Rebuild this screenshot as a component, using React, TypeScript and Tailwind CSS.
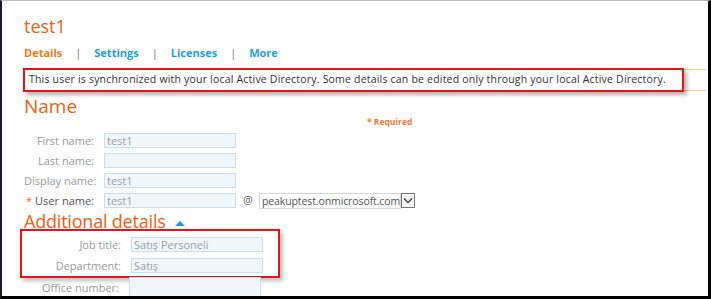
import React from "react";

const font = { fontFamily: '"Open Sans", "Noto Sans", sans-serif' };

function Input({ value }: { value?: string }) {
  return (
    <div className="w-[132px] h-[15px] bg-[#f1f6fb] border border-[#c9def0] text-[11px] leading-[13px] text-[#a0a0a0] px-[2px] overflow-hidden whitespace-nowrap">
      {value}
    </div>
  );
}

function Row({
  label,
  value,
  labelW,
  star,
  children,
}: {
  label: string;
  value?: string;
  labelW: string;
  star?: boolean;
  children?: React.ReactNode;
}) {
  return (
    <div className="flex items-center h-[15px]">
      <div className={`${labelW} text-right text-[11px] leading-[15px] text-[#9a9a9a] pr-[10px] whitespace-nowrap`}>
        {star && <span className="text-[#f26b1d] mr-[3px]">*</span>}
        <span className={star ? "text-[#555]" : ""}>{label}</span>
      </div>
      <Input value={value} />
      {children}
    </div>
  );
}

export default function App() {
  return (
    <div
      className="w-[711px] h-[299px] bg-white border-l-2 border-l-[#1a1a2a] border-r-[3px] border-r-black border-b-[3px] border-b-black border-t border-t-[#bbb] overflow-hidden"
      style={font}
    >
      <div className="pl-[22px] pt-[13px]">
        <div className="text-[18px] leading-[24px] text-[#ea6212]">test1</div>
        <div className="flex items-center mt-[7px] text-[11px] font-bold leading-[16px]">
          <span className="text-[#ef7a1a]">Details</span>
          <span className="text-[#777] font-normal mx-[13px]">|</span>
          <span className="text-[#1ea0e0]">Settings</span>
          <span className="text-[#777] font-normal mx-[13px]">|</span>
          <span className="text-[#1ea0e0]">Licenses</span>
          <span className="text-[#777] font-normal mx-[13px]">|</span>
          <span className="text-[#1ea0e0]">More</span>
        </div>
        <div className="mt-[8px] mr-[2px] border-t border-b border-[#f6cc8c] h-[22px] relative">
          <div className="absolute left-[-1px] -top-[2px] w-[661px] h-[24px] border-2 border-[#e8141c] shadow-[3px_3px_4px_rgba(0,0,0,0.3)] bg-white flex items-center pl-[4px]">
            <span className="text-[10.5px] text-[#333] whitespace-nowrap tracking-[0.2px]">
              This user is synchronized with your local Active Directory. Some details can be edited only through your local Active Directory.
            </span>
          </div>
        </div>
        <div className="text-[19px] leading-[22px] text-[#ea6212] mt-[4px]">Name</div>
        <div className="pl-[343px] text-[8.5px] font-bold text-[#f47b38] leading-[12px] -mt-[1px]">* Required</div>
        <div className="flex flex-col gap-[5px] mt-[5px]">
          <Row label="First name:" value="test1" labelW="w-[80px]" />
          <Row label="Last name:" labelW="w-[80px]" />
          <Row label="Display name:" value="test1" labelW="w-[80px]" />
          <Row label="User name:" value="test1" labelW="w-[80px]" star>
            <span className="text-[11px] text-[#666] ml-[7px] mr-[6px]">@</span>
            <div className="h-[16px] w-[142px] border border-[#d8d8d8] text-[10.5px] leading-[14px] text-[#555] pl-[2px] whitespace-nowrap overflow-hidden tracking-[-0.1px]">
              peakuptest.onmicrosoft.com
            </div>
            <div className="h-[15px] w-[14px] border border-[#777] bg-[#f4f4f4] flex items-center justify-center">
              <svg width="10" height="7" viewBox="0 0 10 7">
                <path d="M1 1.5 L5 5.5 L9 1.5" stroke="#444" strokeWidth="1.3" fill="none" />
              </svg>
            </div>
          </Row>
        </div>
        <div className="flex items-end mt-[3px] h-[20px]">
          <span className="text-[18px] leading-[20px] text-[#ea6212] tracking-[-0.2px]">Additional details</span>
          <svg className="ml-[9px] mb-[5px]" width="10" height="5" viewBox="0 0 10 5">
            <path d="M0 5 L5 0 L10 5 Z" fill="#1e9be0" />
          </svg>
        </div>
        <div className="-ml-[4px] -mt-[2px] w-[260px] h-[49px] border-2 border-[#e8141c] shadow-[3px_3px_4px_rgba(0,0,0,0.25)] flex flex-col gap-[6px] pt-[6px]">
          <Row label="Job title:" value="Satış Personeli" labelW="w-[109px]" />
          <Row label="Department:" value="Satış" labelW="w-[109px]" />
        </div>
        <div className="flex items-center -mt-[1px]">
          <div className="w-[105px] text-right text-[11px] leading-[15px] text-[#9a9a9a] pr-[10px] whitespace-nowrap">Office number:</div>
          <div className="w-[132px] h-[20px] bg-[#f1f6fb] border border-[#c9def0]" />
        </div>
      </div>
    </div>
  );
}
